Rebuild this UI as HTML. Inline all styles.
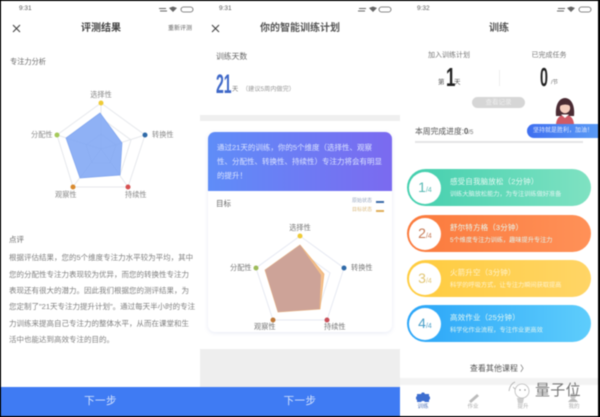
<!DOCTYPE html>
<html><head><meta charset="utf-8">
<style>
html,body{margin:0;padding:0;background:#000}
body{width:600px;height:417px;overflow:hidden;position:relative;font-family:"Liberation Sans","Noto Sans CJK SC",sans-serif}
#w{position:absolute;left:0;top:0;width:600px;height:417px;background:#000;overflow:hidden}
#f{position:absolute;left:0;top:0;width:600px;height:417px;filter:blur(.6px)}
.p{position:absolute;top:1px;height:415px;background:#fff;overflow:hidden}
.t{position:absolute;white-space:nowrap;line-height:1}
.c{transform:translateX(-50%)}
svg{position:absolute;left:0;top:0}
.btn{position:absolute;left:0;height:29px;top:387px;background:#3f7bf3;color:#d5e3fd;font-size:10.500px;text-align:center;line-height:29px;letter-spacing:.4px}
.pill{position:absolute;left:407px;width:184px;height:37px;border-radius:19px}
.circ{position:absolute;left:2px;top:2.500px;width:32px;height:32px;border-radius:50%;background:#fff}
.cn{position:absolute;left:2px;top:11px;width:32px;text-align:center;font-size:14px;line-height:1;white-space:nowrap}
.cn small{font-size:7px}
.a{position:absolute;left:43px;top:9px;font-size:7.500px;color:#e6f9f3;white-space:nowrap;line-height:1;letter-spacing:.15px}
.b{position:absolute;left:43px;top:23px;font-size:6.200px;color:#e0f5f1;white-space:nowrap;line-height:1}
</style></head><body>
<div id="w"><div id="f">
<div class="p" style="left:1px;width:199px"></div>
<div class="p" style="left:200px;width:200px"></div>
<div class="p" style="left:400px;width:198px"></div>

<div class="t" style="left:19px;top:6px;font-size:6.500px;color:#555">9:31</div>
<svg width="600" height="417">
<g fill="none" stroke="#444" stroke-width="1.100">
<path d="M13 25l7 7M20 25l-7 7"/><path d="M212 25l7 7M219 25l-7 7"/>
</g>
<g fill="#666">
<path d="M159 8h7v1h-7zM160 10.500h7v1h-7z"/><path d="M359 8h7v1h-7zM358 10.500h7v1h-7z"/><path d="M558 8h7v1h-7zM557 10.500h7v1h-7z"/>
<path d="M169 8l4-1.500 4 1.500-4 4z"/><path d="M369 8l4-1.500 4 1.500-4 4z"/><path d="M567 8l4-1.500 4 1.500-4 4z"/>
</g>
<g fill="none" stroke="#666" stroke-width=".8">
<rect x="181" y="7" width="12" height="5" rx="2.500"/><rect x="379" y="7" width="12" height="5" rx="2.500"/><rect x="579" y="7" width="12" height="5" rx="2.500"/>
</g>
<g fill="none" stroke="#e6e8ec" stroke-width="1">
<path d="M101 103L145 135 128 187H73L57 135Z"/>
<path d="M101 118L131 140 120 175H82L71 140Z"/>
<path d="M101 149V103M101 149L145 135M101 149L128 187M101 149L73 187M101 149L57 135"/>
</g>
<path d="M100 113L122 143 120 175 80 178 66 138Z" fill="#8fb1f5" stroke="#7ea3ee" stroke-width=".7"/>
<g fill="none" stroke="#7b9fe6" stroke-width=".5" opacity=".35">
<path d="M101 134L116 145 110 163H92L86 145Z"/><path d="M101 118V149M101 149L122 143M101 149L120 175M101 149L80 178M101 149L66 138"/>
</g>
<circle cx="101" cy="103" r="2.500" fill="#efcb37"/>
<circle cx="145" cy="135" r="2.500" fill="#2f6aa8"/>
<circle cx="128" cy="187" r="2.500" fill="#d65050"/>
<circle cx="73" cy="187" r="2.500" fill="#d98a2f"/>
<circle cx="57" cy="135" r="2.500" fill="#a5c95a"/>
</svg>

<div class="t c" style="left:101px;top:24px;font-size:10px;color:#444;font-weight:700">评测结果</div>
<div class="t" style="left:168px;top:26px;font-size:6px;color:#666">重新评测</div>
<div class="t" style="left:10px;top:58px;font-size:7.200px;color:#666">专注力分析</div>
<div class="t c" style="left:101px;top:91px;font-size:7.200px;color:#888">选择性</div>
<div class="t" style="left:152px;top:131px;font-size:7.200px;color:#888">转换性</div>
<div class="t" style="left:125px;top:191px;font-size:7.200px;color:#888">持续性</div>
<div class="t" style="left:55px;top:191px;font-size:7.200px;color:#888">观察性</div>
<div class="t" style="left:31px;top:131px;font-size:7.200px;color:#888">分配性</div>
<div class="t" style="left:9px;top:236px;font-size:7.500px;color:#666">点评</div>
<div class="t" style="left:9px;top:254px;font-size:7.500px;color:#808080">根据评估结果，您的5个维度专注力水平较为平均，其中</div>
<div class="t" style="left:9px;top:271px;font-size:7.500px;color:#808080">您的分配性专注力表现较为优异，而您的转换性专注力</div>
<div class="t" style="left:9px;top:287px;font-size:7.500px;color:#808080">表现还有很大的潜力。因此我们根据您的测评结果，为</div>
<div class="t" style="left:9px;top:303px;font-size:7.500px;color:#808080">您定制了"21天专注力提升计划"。通过每天半小时的专注</div>
<div class="t" style="left:9px;top:320px;font-size:7.500px;color:#808080">力训练来提高自己专注力的整体水平，从而在课堂和生</div>
<div class="t" style="left:9px;top:336px;font-size:7.500px;color:#808080">活中也能达到高效专注的目的。</div>
<div class="btn" style="left:1px;width:199px">下一步</div>

<div class="t" style="left:219px;top:6px;font-size:6.500px;color:#555">9:31</div>
<div class="t c" style="left:300px;top:24px;font-size:10px;color:#555;font-weight:700">你的智能训练计划</div>
<div class="t" style="left:216px;top:53px;font-size:7.800px;color:#666">训练天数</div>
<div class="t" style="left:216px;top:71px;font-size:27px;color:#3f68c8;font-weight:700;transform:scaleX(.52);transform-origin:left top">21</div>
<div class="t" style="left:232px;top:87px;font-size:6.200px;color:#777">天</div>
<div class="t" style="left:242px;top:87px;font-size:6.200px;color:#999">（建议5周内做完）</div>
<div style="position:absolute;left:200px;top:115px;width:200px;height:6px;background:#efefef"></div>
<div style="position:absolute;left:200px;top:349px;width:200px;height:38px;background:#eeeeee"></div>
<div style="position:absolute;left:208px;top:132px;width:184px;height:200px;background:#fff;border-radius:7px;box-shadow:0 1px 4px rgba(120,140,200,.18)"></div>
<div style="position:absolute;left:208px;top:132px;width:184px;height:59px;background:linear-gradient(90deg,#5f8df8,#7b6af0);border-radius:7px 7px 0 0"></div>
<div class="t" style="left:217px;top:144px;font-size:7.500px;color:#dbe3ff">通过21天的训练，你的5个维度（选择性、观察</div>
<div class="t" style="left:217px;top:158px;font-size:7.500px;color:#dbe3ff">性、分配性、转换性、持续性）专注力将会有明显</div>
<div class="t" style="left:217px;top:172px;font-size:7.500px;color:#dbe3ff">的提升！</div>
<div class="t" style="left:216px;top:200px;font-size:7.500px;color:#666">目标</div>
<div class="t" style="left:352px;top:199px;font-size:5px;color:#9aa8c0">原始状态</div>
<div style="position:absolute;left:376px;top:201px;width:8px;height:1.500px;background:#3a6aa8"></div>
<div class="t" style="left:352px;top:208px;font-size:5px;color:#dcbc82">目标状态</div>
<div style="position:absolute;left:376px;top:210px;width:8px;height:1.500px;background:#e0ae5a"></div>

<svg width="600" height="417">
<g fill="none" stroke="#e6e9f2" stroke-width="1">
<path d="M300 236L344 268 327 320H273L256 268Z"/>
<path d="M300 251L330 273 319 308H281L270 273Z"/>
</g>
<path d="M300 245L324 274 320 309 278 312 265 270Z" fill="#f4c08c" stroke="#eeb070" stroke-width=".7"/>
<path d="M300 245L321 275 319.500 309 278 312 265 270Z" fill="#cda398"/>
<circle cx="300" cy="236" r="2.500" fill="#efcb37"/>
<circle cx="344" cy="268" r="2.500" fill="#2f6aa8"/>
<circle cx="327" cy="320" r="2.500" fill="#c9505a"/>
<circle cx="273" cy="320" r="2.500" fill="#c07a3a"/>
<circle cx="256" cy="268" r="2.500" fill="#9dbb5a"/>
</svg>
<div class="t c" style="left:300px;top:224px;font-size:7.200px;color:#777">选择性</div>
<div class="t" style="left:351px;top:264px;font-size:7.200px;color:#777">转换性</div>
<div class="t" style="left:324px;top:323px;font-size:7.200px;color:#777">持续性</div>
<div class="t" style="left:254px;top:323px;font-size:7.200px;color:#777">观察性</div>
<div class="t" style="left:230px;top:264px;font-size:7.200px;color:#777">分配性</div>
<div class="btn" style="left:200px;width:200px">下一步</div>

<div class="t" style="left:417px;top:6px;font-size:6.500px;color:#555">9:32</div>
<div class="t c" style="left:499px;top:24px;font-size:10px;color:#555;font-weight:700">训练</div>
<div class="t c" style="left:449px;top:52px;font-size:7px;color:#777">加入训练计划</div>
<div class="t c" style="left:549px;top:52px;font-size:7px;color:#777">已完成任务</div>
<div class="t" style="left:438px;top:80px;font-size:6.500px;color:#555">第</div>
<div class="t" style="left:446px;top:64px;font-size:26px;color:#222;font-weight:700;transform:scaleX(.65);transform-origin:left top">1</div>
<div class="t" style="left:454px;top:80px;font-size:6.500px;color:#555">天</div>
<div class="t" style="left:540px;top:64px;font-size:26px;color:#222;font-weight:700;transform:scaleX(.55);transform-origin:left top">0</div>
<div class="t" style="left:551px;top:81px;font-size:5.500px;color:#666">/节</div>
<div style="position:absolute;left:499px;top:70px;width:1px;height:16px;background:#eee"></div>
<div style="position:absolute;left:472px;top:97px;width:53px;height:11px;background:#d6d6d6;border-radius:6px;color:#eee;font-size:6.500px;text-align:center;line-height:11px">查看记录</div>
<div class="t" style="left:415px;top:128px;font-size:7.800px;color:#555">本周完成进度:<span style="font-weight:700">0</span><span style="font-size:6px;color:#777">/5</span></div>
<div style="position:absolute;left:415px;top:141px;width:168px;height:2px;background:#e4e4e6"></div>

<svg width="600" height="417">
<path d="M556 116q-1-11 4-16 5-4 10 0 5 5 4 16z" fill="#4a2b33"/>
<circle cx="565" cy="108" r="5.200" fill="#f7cfc0"/>
<path d="M559.500 106q5-7 11 0-5-3-11 0z" fill="#4a2b33"/>
<path d="M556 124q1-9 9-9t9 9z" fill="#cf5a66"/>
<path d="M561 114.500h8l-4 3.500z" fill="#fff"/>
</svg>
<div style="position:absolute;left:527px;top:124px;width:71px;height:14px;background:linear-gradient(90deg,#3f6ff0,#5a9af5);border-radius:7px 0 0 7px;color:#dfe9ff;font-size:6px;line-height:14px;white-space:nowrap;padding-left:6px;box-sizing:border-box;overflow:hidden">坚持就是胜利，加油！</div>

<div class="pill" style="top:169px;background:linear-gradient(90deg,#43cfae,#7fe2c2)">
<div class="circ"></div><div class="cn" style="color:#58b9b4">1<small>/4</small></div>
<div class="a">感受自我脑放松（2分钟）</div><div class="b">训练大脑放松能力，为专注训练做好准备</div></div>
<div class="pill" style="top:215px;background:linear-gradient(90deg,#fb7a3c,#ff9158)">
<div class="circ"></div><div class="cn" style="color:#c67a55">2<small>/4</small></div>
<div class="a">舒尔特方格（3分钟）</div><div class="b">5个维度专注力训练，趣味提升专注力</div></div>
<div class="pill" style="top:260px;background:linear-gradient(90deg,#ffcc3e,#ffd566)">
<div class="circ"></div><div class="cn" style="color:#e2c676">3<small>/4</small></div>
<div class="a" style="color:#fff3cf">火箭升空（3分钟）</div><div class="b" style="color:#fff3cf">科学的呼吸方式，让专注力瞬间获取提高</div></div>
<div class="pill" style="top:305px;background:linear-gradient(90deg,#2aa5f8,#5ecdfc)">
<div class="circ"></div><div class="cn" style="color:#4a9fc9">4<small>/4</small></div>
<div class="a">高效作业（25分钟）</div><div class="b">科学化作业流程，专注作业更高效</div></div>

<div class="t c" style="left:499px;top:365px;font-size:8px;color:#555">查看其他课程 〉</div>
<div style="position:absolute;left:400px;top:378px;width:198px;height:7px;background:#f3f3f3"></div>
<svg width="600" height="417">
<path d="M417 394h4l1-1.500 2 0 1 1.500h4v2l1 1v2l-1 1v2h-4l-1-1h-2l-1 1h-4v-2l-1-1v-2l1-1z" fill="#3d6ed0"/>
<path d="M469 401l8-7 2 2-8 7z" fill="#bbb"/>
<path d="M568 402q5-7 10 0z" fill="#bbb"/><circle cx="573" cy="396" r="3" fill="#ccc"/>
<path d="M517 398h7l-1 5h-5z" fill="#ccc"/>
</svg>
<div class="t c" style="left:423px;top:405px;font-size:5.500px;color:#5577bb">训练</div>
<div class="t c" style="left:473px;top:405px;font-size:5.500px;color:#aaa">作业</div>
<div class="t c" style="left:523px;top:405px;font-size:5.500px;color:#aaa">提升</div>
<div class="t c" style="left:574px;top:405px;font-size:5.500px;color:#aaa">我的</div>

<svg width="600" height="417">
<circle cx="522" cy="391" r="7" fill="#fff" stroke="#bbb" stroke-width=".8"/>
<path d="M509 391q1-7 6-9M513 387l2 2" fill="none" stroke="#aaa" stroke-width=".8"/>
<circle cx="520" cy="390" r=".7" fill="#888"/><circle cx="525" cy="390" r=".7" fill="#888"/>
</svg>
<div class="t" style="left:535px;top:383px;font-size:15px;color:#777;letter-spacing:.3px">量子位</div>
</div></div>
</body></html>
